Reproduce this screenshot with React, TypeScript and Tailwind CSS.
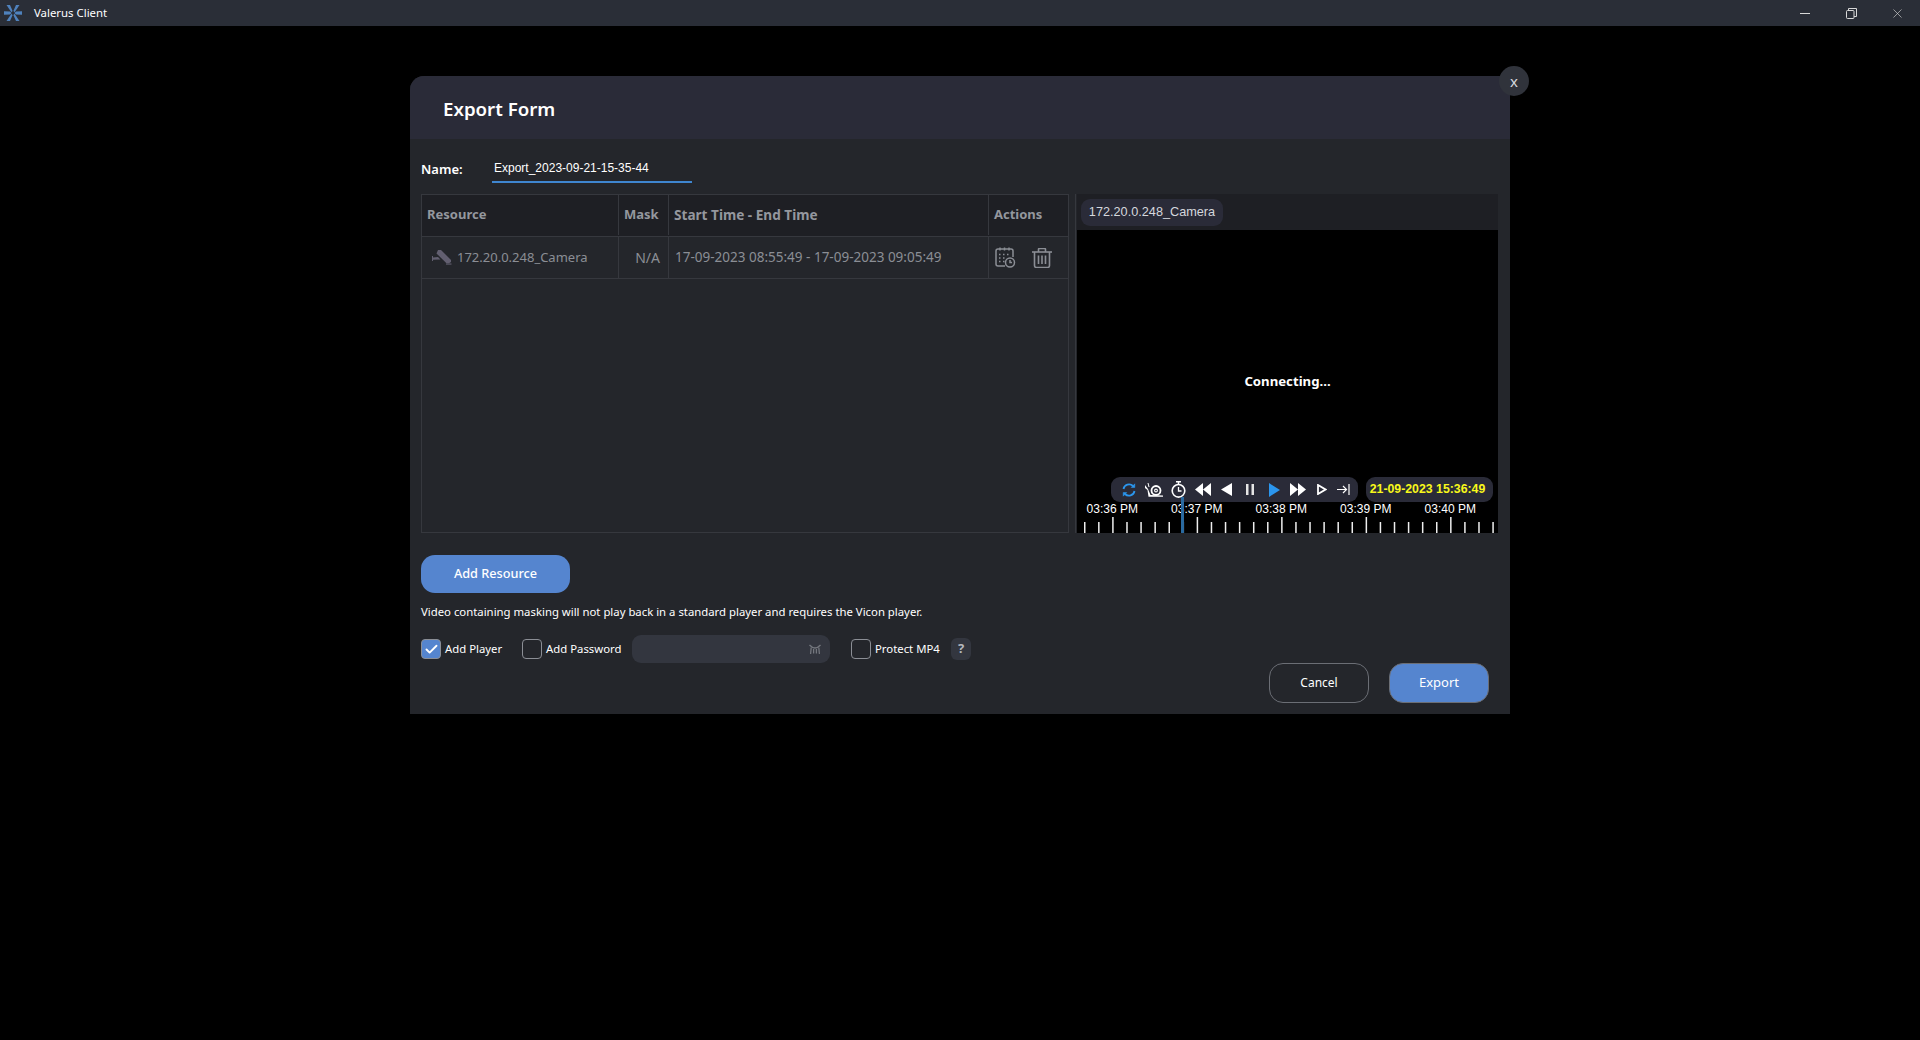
import { Check, X } from "lucide-react";

const timeLabels = ["03:36 PM", "03:37 PM", "03:38 PM", "03:39 PM", "03:40 PM"];

function Logo() {
  return (
    <svg width="18" height="16" viewBox="0 0 18 16" fill="#4f82bd">
      <path d="M2.5 0 L6 0 L8.6 6 L7.4 7.2 Z" />
      <path d="M15.5 0 L12 0 L9.4 6 L10.6 7.2 Z" />
      <path d="M0 6.2 L6 6.6 L7.6 8 L6 9.4 L0 9.8 Z" />
      <path d="M18 6.2 L12 6.6 L10.4 8 L12 9.4 L18 9.8 Z" />
      <path d="M2.5 16 L6 16 L8.6 10 L7.4 8.8 Z" />
      <path d="M15.5 16 L12 16 L9.4 10 L10.6 8.8 Z" />
    </svg>
  );
}

function CameraIcon() {
  return (
    <svg width="20" height="15" viewBox="0 0 20 15" fill="#625f70">
      <path d="M6 0 L9 0 L19 10 L19 12 L17 13.2 L14.5 13.2 L4.5 3.5 Z" />
      <path d="M0 6 L1 6 L1 7.5 L6 7 L8.5 9.5 L1 9.8 L1 11 L0 11 Z" />
      <path d="M14 13.5 L19.5 13.5 L19.5 14.6 L14 14.6 Z" />
    </svg>
  );
}

function CalendarClock() {
  return (
    <svg width="21" height="21" viewBox="0 0 21 21" fill="none" stroke="#8b8e95" strokeWidth="1.5">
      <path d="M10 19 H3 a2 2 0 0 1 -2 -2 V4 a2 2 0 0 1 2 -2 H16 a2 2 0 0 1 2 2 V10" />
      <path d="M5 0.5 V3.5 M9.5 0.5 V3.5 M14 0.5 V3.5" />
      <path d="M4 7.5 H5.5 M8 7.5 H9.5 M12 7.5 H13.5 M4 11 H5.5 M8 11 H9.5 M4 14.5 H5.5 M8 14.5 H9.5" />
      <circle cx="15" cy="15.5" r="4.5" />
      <path d="M15 13 V15.5 H17" />
    </svg>
  );
}

function TrashIcon() {
  return (
    <svg width="20" height="20" viewBox="0 0 20 20" fill="none" stroke="#8b8e95" strokeWidth="1.6">
      <path d="M0 4 H20" />
      <path d="M6.5 4 V1.5 a1 1 0 0 1 1 -1 H12.5 a1 1 0 0 1 1 1 V4" />
      <path d="M2.5 4 V17.5 a2 2 0 0 0 2 2 H15.5 a2 2 0 0 0 2 -2 V4" />
      <path d="M6.5 7.5 V16 M10 7.5 V16 M13.5 7.5 V16" />
    </svg>
  );
}

function ClosedEye() {
  return (
    <svg width="12" height="11" viewBox="0 0 12 11" fill="none" stroke="#74777e" strokeWidth="1.3">
      <path d="M0.5 1 Q6 7 11.5 1" />
      <path d="M2.2 3.5 L1.6 10 M4.6 5 V9.5 M7.4 5 V9.5 M9.8 3.5 L10.4 10" />
    </svg>
  );
}

function SyncIcon() {
  return (
    <svg width="14" height="14" viewBox="0 0 14 14" fill="none" stroke="#2b96ee" strokeWidth="1.8">
      <path d="M1.5 6 A5.6 5.6 0 0 1 11 3" />
      <path d="M12.5 8 A5.6 5.6 0 0 1 3 11" />
      <path d="M12.8 0.8 V4.5 H9.2 Z" fill="#2b96ee" strokeWidth="0.5" />
      <path d="M1.2 13.2 V9.5 H4.8 Z" fill="#2b96ee" strokeWidth="0.5" />
    </svg>
  );
}

function Snail() {
  return (
    <svg width="18" height="14" viewBox="0 0 18 14" fill="none">
      <path d="M0 2 L3 6 L5.5 12 L18 12.5 L18 13.8 L3.5 13.8 L2.5 7 L0 5 Z" fill="white" />
      <path d="M3 0 L4 4" stroke="white" strokeWidth="1" />
      <circle cx="11" cy="7.5" r="4.5" stroke="white" strokeWidth="1.8" />
      <circle cx="11" cy="7.5" r="1.4" stroke="white" strokeWidth="1.1" />
    </svg>
  );
}

function Stopwatch() {
  return (
    <svg width="15" height="17" viewBox="0 0 15 17" fill="none" stroke="white">
      <path d="M5 0.8 H10 M7.5 1 V3" strokeWidth="1.5" />
      <circle cx="7.5" cy="9.8" r="6.3" strokeWidth="1.6" />
      <path d="M7.5 6 V10 H10.5" strokeWidth="1.3" />
    </svg>
  );
}

function PlayerControls() {
  return (
    <div className="flex items-center gap-2 justify-end">
      <div className="w-[247px] h-[25px] rounded-[9px] bg-[#2a2b38] flex items-center pl-[5px]">
        <div className="w-[25px] flex justify-center"><SyncIcon /></div>
        <div className="w-[25px] flex justify-center"><Snail /></div>
        <div className="w-[24px] flex justify-center"><Stopwatch /></div>
        <div className="w-[25px] flex justify-center">
          <svg width="16" height="13" viewBox="0 0 16 13" fill="white"><path d="M8 0 V13 L0 6.5 Z M16 0 V13 L8 6.5 Z" /></svg>
        </div>
        <div className="w-[23px] flex justify-center">
          <svg width="11" height="13" viewBox="0 0 11 13" fill="white"><path d="M11 0 V13 L0 6.5 Z" /></svg>
        </div>
        <div className="w-[24px] flex justify-center">
          <svg width="8" height="11" viewBox="0 0 8 11" fill="#e5e5e5"><path d="M0 0 H2.5 V11 H0 Z M5.5 0 H8 V11 H5.5 Z" /></svg>
        </div>
        <div className="w-[24px] flex justify-center">
          <svg width="11" height="14" viewBox="0 0 11 14" fill="#2b96ee"><path d="M0 0 V14 L11 7 Z" /></svg>
        </div>
        <div className="w-[24px] flex justify-center">
          <svg width="16" height="13" viewBox="0 0 16 13" fill="white"><path d="M0 0 V13 L8 6.5 Z M8 0 V13 L16 6.5 Z" /></svg>
        </div>
        <div className="w-[23px] flex justify-center">
          <svg width="10" height="11" viewBox="0 0 10 11" fill="none" stroke="white" strokeWidth="1.8"><path d="M1 1 V10 L8.5 5.5 Z" /></svg>
        </div>
        <div className="w-[20px] flex justify-center">
          <svg width="13" height="11" viewBox="0 0 13 11" fill="none" stroke="white" strokeWidth="1.2"><path d="M0 5.5 H9 M6 2 L9.5 5.5 L6 9 M12 0 V11" /></svg>
        </div>
      </div>
      <div className="w-[127px] h-[25px] rounded-[9px] bg-[#2a2b38] flex items-center justify-center pr-[4px] text-[12.3px] font-bold text-[#f8f81a] font-['Liberation_Sans',sans-serif]">
        21-09-2023 15:36:49
      </div>
    </div>
  );
}

function Timeline() {
  const ticks = Array.from({ length: 30 }, (_, i) => i);
  return (
    <div className="relative">
      <div className="flex ml-[-7px] h-[15px] text-[12px] leading-[14px] text-white font-['Liberation_Sans',sans-serif]">
        {timeLabels.map((t) => (
          <div key={t} className="w-[84.5px] text-center shrink-0">{t}</div>
        ))}
      </div>
      <svg width="422" height="16" viewBox="0 0 422 16" className="block">
        {ticks.map((i) => {
          const major = (i + 4) % 6 === 0;
          return (
            <rect
              key={i}
              x={7 + i * 14.08}
              y={major ? 0 : 5}
              width="1.5"
              height={major ? 16 : 11}
              fill="#eeeeee"
            />
          );
        })}
      </svg>
      <div className="absolute left-[104px] top-[-5px] bottom-0 w-[3px] bg-[#2a6aa0]" />
    </div>
  );
}

export default function App() {
  return (
    <div className="h-[1040px] overflow-hidden bg-black font-['Noto_Sans',sans-serif] text-white">
      <div className="h-[26px] bg-[#2a2e37] flex items-center pl-[4px]">
        <Logo />
        <span className="ml-[12px] text-[11.4px]">Valerus Client</span>
        <div className="ml-auto flex items-center text-[#d8d8d8]">
          <div className="w-[46px] flex justify-center"><div className="w-[10px] h-px bg-[#d8d8d8]" /></div>
          <div className="w-[46px] flex justify-center">
            <svg width="11" height="11" viewBox="0 0 11 11" fill="none" stroke="#d8d8d8">
              <rect x="0.5" y="2.5" width="7.5" height="8" rx="1" />
              <path d="M2.5 2.5 V0.5 H10.5 V8.5 H8" />
            </svg>
          </div>
          <div className="w-[46px] flex justify-center"><X size={15} strokeWidth={1} /></div>
        </div>
      </div>

      <div className="relative mt-[50px] ml-[410px] w-[1100px] h-[638px] bg-[#24262b] rounded-tl-[14px] flex flex-col">
        <button className="absolute right-[-19px] top-[-10px] w-[30px] h-[30px] rounded-full bg-[#30333b] text-[#d5d8de] text-[15px] leading-none flex items-center justify-center">
          x
        </button>

        <div className="h-[63px] shrink-0 bg-[#2a2b38] rounded-tl-[14px] flex items-center pl-[33px] pt-[3px] text-[18.7px] font-semibold">
          Export Form
        </div>

        <div className="px-[11px] flex flex-col flex-1 min-h-0">
          <div className="flex items-end h-[44px] shrink-0">
            <span className="w-[71px] text-[13px] font-semibold pb-[4px]">Name:</span>
            <div className="w-[200px] h-[31px] border-b-2 border-[#3f86d0] pl-[2px] pt-[2px] flex items-center text-[12px] font-['Liberation_Sans',sans-serif]">
              Export_2023-09-21-15-35-44
            </div>
          </div>

          <div className="flex gap-[6px] mt-[11px] h-[339px] shrink-0">
            <div className="w-[648px] h-full border border-[#36383e] shrink-0">
              <div className="grid grid-cols-[197px_50px_320px_1fr] h-[42px] pb-px bg-[#1e1f24] border-b border-[#36383e] text-[13px] font-bold text-[#94979e]">
                <div className="flex items-center pl-[5px] border-r border-[#36383e]">Resource</div>
                <div className="flex items-center pl-[5px] border-r border-[#36383e]">Mask</div>
                <div className="flex items-center pl-[5px] border-r border-[#36383e] text-[13.6px]">Start Time - End Time</div>
                <div className="flex items-center pl-[5px]">Actions</div>
              </div>
              <div className="grid grid-cols-[197px_50px_320px_1fr] h-[42px] border-b border-[#36383e] text-[13px] text-[#8b8e95]">
                <div className="flex items-center pl-[10px] gap-[5px] border-r border-[#36383e]">
                  <CameraIcon />
                  <span>172.20.0.248_Camera</span>
                </div>
                <div className="flex items-center justify-end pr-[8px] border-r border-[#36383e] text-[14px]">N/A</div>
                <div className="flex items-center pl-[6px] border-r border-[#36383e] text-[13.5px]">17-09-2023 08:55:49 - 17-09-2023 09:05:49</div>
                <div className="flex items-center pl-[6px] gap-[16px]">
                  <CalendarClock />
                  <TrashIcon />
                </div>
              </div>
            </div>

            <div className="w-[423px] shrink-0 h-full border-l border-[#36383e] flex flex-col pl-px">
              <div className="h-[36px] shrink-0 bg-[#1e1f24] flex items-center pl-[4px]">
                <div className="h-[27px] w-[142px] pt-px rounded-[9px] bg-[#2a2b38] flex items-center justify-center text-[12.7px] text-[#d5d8de] font-['Liberation_Sans',sans-serif]">
                  172.20.0.248_Camera
                </div>
              </div>
              <div className="flex-1 min-h-0 bg-black flex flex-col">
                <div className="flex-1 flex items-center justify-center text-[13.2px] font-bold pt-[57px]">
                  Connecting...
                </div>
                <div className="pr-[5px]"><PlayerControls /></div>
                <Timeline />
              </div>
            </div>
          </div>

          <button className="mt-[22px] w-[149px] h-[38px] rounded-[14px] bg-[#5585cf] text-[12.7px] font-medium shrink-0">
            Add Resource
          </button>

          <p className="mt-[10px] text-[11.35px] leading-[17px]">
            Video containing masking will not play back in a standard player and requires the Vicon player.
          </p>

          <div className="mt-[15px] flex items-center h-[28px] text-[11.35px] whitespace-nowrap shrink-0">
            <div className="w-[20px] h-[20px] rounded-[4px] bg-[#5585cf] border border-[#8b8e95] flex items-center justify-center">
              <Check size={15} strokeWidth={3} />
            </div>
            <span className="ml-[4px] w-[57px]">Add Player</span>
            <div className="ml-[20px] w-[20px] h-[20px] rounded-[4px] border border-[#8b8e95]" />
            <span className="ml-[4px] w-[75px]">Add Password</span>
            <div className="ml-[11px] w-[198px] h-[28px] rounded-[9px] bg-[#33363f] flex items-center justify-end pr-[9px]">
              <ClosedEye />
            </div>
            <div className="ml-[21px] w-[20px] h-[20px] rounded-[4px] border border-[#8b8e95]" />
            <span className="ml-[4px] w-[66px]">Protect MP4</span>
            <div className="ml-[10px] w-[20px] h-[22px] rounded-[6px] bg-[#33363f] flex items-center justify-center text-[13px] font-bold text-[#b5b8be]">?</div>
          </div>

          <div className="flex justify-end gap-[20px] pr-[10px] text-[12px]">
            <button className="w-[100px] h-[40px] rounded-[14px] border border-[#6b6e75]">Cancel</button>
            <button className="w-[100px] h-[40px] rounded-[14px] bg-[#5585cf] border border-[#6b6e75] text-[13px]">Export</button>
          </div>
        </div>
      </div>
    </div>
  );
}
